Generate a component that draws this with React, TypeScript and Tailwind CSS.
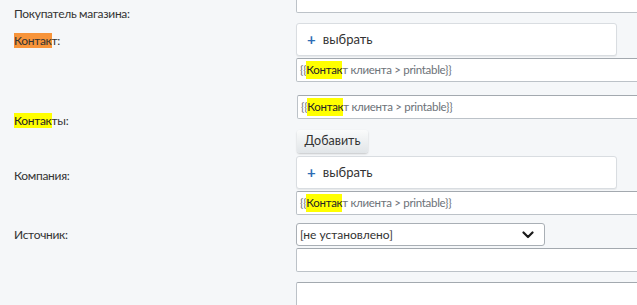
import React from 'react';

const font = { fontFamily: 'Lato, "Open Sans", sans-serif' };

function Hl({ children, color }: { children: React.ReactNode; color: 'yellow' | 'orange' }) {
  return (
    <span className={color === 'yellow' ? 'bg-[#ffff00] text-[#1f2326]' : 'bg-[#f7943a]'}>{children}</span>
  );
}

function TextInput({ value, className = '' }: { value?: boolean; className?: string }) {
  return (
    <div
      className={`h-[24px] w-[420px] bg-white border border-[#bcc2c8] border-t-[#a3a9af] rounded-[2px] flex items-center pl-[3px] text-[11.5px] tracking-[-0.3px] text-[#6d7278] whitespace-nowrap ${className}`}
    >
      {value && (
        <>
          {'{{'}
          <Hl color="yellow">Контак</Hl>т клиента &gt; printable{'}}'}
        </>
      )}
    </div>
  );
}

function PickBox() {
  return (
    <div className="h-[33px] w-[321px] bg-white border border-[#d9dde1] rounded-[3px] shadow-[0_1px_1px_rgba(0,0,0,0.06)] flex items-center pl-[10px] gap-[7px] text-[13px] text-[#333]">
      <span className="text-[#2d6db5] text-[15px] font-bold leading-none -mt-[1px]">+</span>
      <span>выбрать</span>
    </div>
  );
}

function Label({ children, pt }: { children: React.ReactNode; pt: string }) {
  return (
    <div className={`w-[296px] shrink-0 pl-[14px] text-[12px] tracking-[-0.3px] leading-[15px] text-[#333] ${pt}`}>
      {children}
    </div>
  );
}

export default function App() {
  return (
    <div className="h-[305px] w-[637px] overflow-hidden bg-[#f5f7f9]" style={font}>
      {/* Покупатель магазина */}
      <div className="flex h-[24px] -mt-[11px]">
        <Label pt="pt-[17px]">Покупатель магазина:</Label>
        <div className="flex flex-col">
          <TextInput />
        </div>
      </div>

      {/* Контакт */}
      <div className="flex mt-[10px]">
        <Label pt="pt-[10px]">
          <Hl color="orange">Контак</Hl>т:
        </Label>
        <div className="flex flex-col gap-[2px]">
          <PickBox />
          <TextInput value />
        </div>
      </div>

      {/* Контакты */}
      <div className="flex mt-[13px]">
        <Label pt="pt-[18px]">
          <Hl color="yellow">Контак</Hl>ты:
        </Label>
        <div className="flex flex-col gap-[11px] ml-[1px]">
          <TextInput value />
          <button className="h-[23px] w-[71px] rounded-[3px] bg-gradient-to-b from-[#fafbfb] to-[#e1e5e8] shadow-[0_1px_2px_rgba(0,0,0,0.2)] text-[12.5px] text-[#333]">
            Добавить
          </button>
        </div>
      </div>

      {/* Компания */}
      <div className="flex mt-[3px]">
        <Label pt="pt-[12px]">Компания:</Label>
        <div className="flex flex-col gap-[2px]">
          <PickBox />
          <TextInput value />
        </div>
      </div>

      {/* Источник */}
      <div className="flex mt-[8px]">
        <Label pt="pt-[4px]">Источник:</Label>
        <div className="flex flex-col">
          <div className="h-[23px] w-[249px] bg-white border border-[#a9afb5] rounded-[3px] flex items-center justify-between pl-[3px] pr-[10px] text-[12px] text-[#333]">
            <span>[не установлено]</span>
            <svg width="12" height="8" viewBox="0 0 12 8" fill="none">
              <path d="M1.5 1.5 6 6l4.5-4.5" stroke="#1a1a1a" strokeWidth="2.2" strokeLinecap="round" strokeLinejoin="round" />
            </svg>
          </div>
          <TextInput className="mt-[2px]" />
          <div className="mt-[10px] h-[40px] w-[420px] bg-white border border-[#bcc2c8] border-t-[#a3a9af] rounded-[2px]" />
        </div>
      </div>
    </div>
  );
}
